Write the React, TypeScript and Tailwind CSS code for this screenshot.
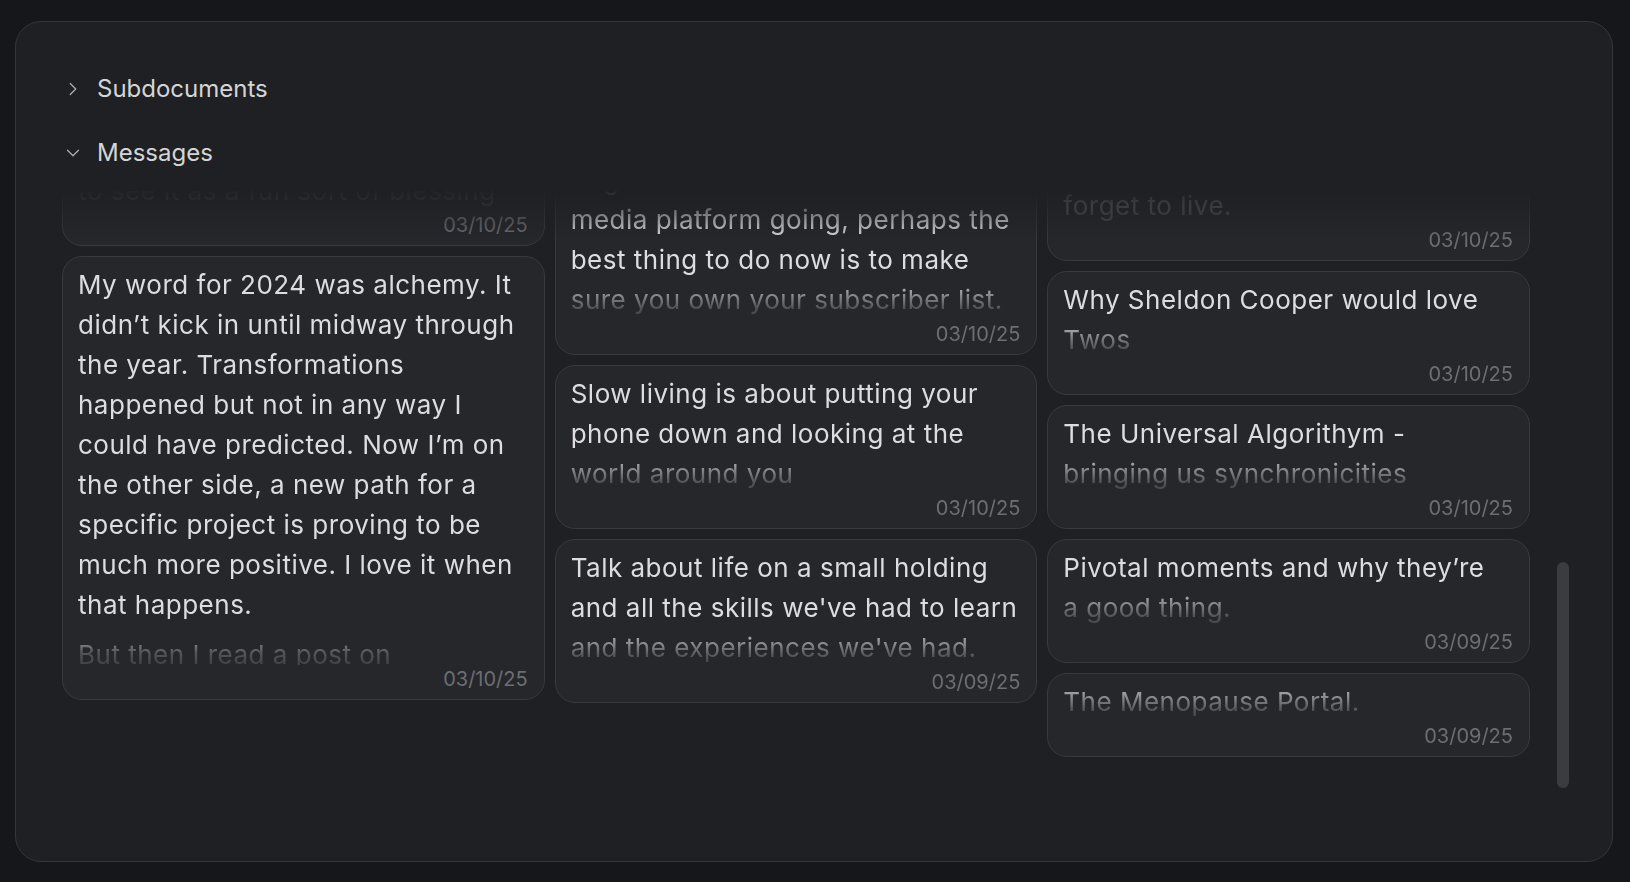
import React from "react";
import { ChevronDown, ChevronRight } from "lucide-react";

type Msg = {
  paras: React.ReactNode[];
  date: string;
  h?: string;
};

const fade =
  "[mask-image:linear-gradient(to_bottom,#000_calc(100%_-_44px),rgba(0,0,0,0.25)_calc(100%_-_12px),rgba(0,0,0,0.15)_100%)]";

const columns: Msg[][] = [
  [
    {
      paras: [
        <>
          Sometimes the smallest shift in perspective is all it takes
          <br />
          to see it as a fun sort of blessing
        </>,
      ],
      date: "03/10/25",
      h: "h-[116px]",
    },
    {
      paras: [
        "My word for 2024 was alchemy. It didn’t kick in until midway through the year. Transformations happened but not in any way I could have predicted. Now I’m on the other side, a new path for a specific project is proving to be much more positive. I love it when that happens.",
        "But then I read a post on synchronicity and how the word for the year should be chosen with care.",
      ],
      date: "03/10/25",
    },
  ],
  [
    {
      paras: [
        <>
          With so much uncertainty about where to go next and no quick way to get a new social
          <br />
          media platform going, perhaps the best thing to do now is to make sure you own your
          subscriber list.
        </>,
      ],
      date: "03/10/25",
      h: "h-[225px]",
    },
    {
      paras: ["Slow living is about putting your phone down and looking at the world around you"],
      date: "03/10/25",
    },
    {
      paras: [
        "Talk about life on a small holding and all the skills we've had to learn and the experiences we've had.",
      ],
      date: "03/09/25",
    },
  ],
  [
    {
      paras: [
        <>
          We get so caught up in making a living that we
          <br />
          forget to live.
        </>,
      ],
      date: "03/10/25",
      h: "h-[131px]",
    },
    { paras: ["Why Sheldon Cooper would love Twos"], date: "03/10/25" },
    { paras: ["The Universal Algorithym - bringing us synchronicities"], date: "03/10/25" },
    { paras: ["Pivotal moments and why they’re a\u00A0good thing."], date: "03/09/25" },
    { paras: ["The Menopause Portal."], date: "03/09/25" },
  ],
];

const MessageCard = ({ msg }: { msg: Msg }) => {
  return (
    <div
      className={`flex flex-col rounded-[20px] border border-[#393a3e] bg-[#26272b] px-[15px] py-[8px] ${
        msg.h ? msg.h + " justify-end overflow-hidden" : ""
      }`}
    >
      <div
        className={`max-h-[400px] overflow-hidden text-[26px] leading-[40px] tracking-[0.5px] text-[#dddddf] ${fade} ${
          msg.h ? "shrink-0" : ""
        }`}
      >
        {msg.paras.map((p, i) => (
          <p key={i} className={i > 0 ? "mt-[10px]" : ""}>
            {p}
          </p>
        ))}
      </div>
      <div className="mt-[2px] shrink-0 pr-px text-right text-[20px] leading-[24px] text-[#6c6e72]">
        {msg.date}
      </div>
    </div>
  );
};

const App = () => {
  return (
    <main className="flex h-[882px] w-full bg-[#16171a] pb-[20px] pl-[15px] pr-[17px] pt-[21px] font-['Inter','Noto_Sans',sans-serif]">
      <section className="flex flex-1 flex-col rounded-[26px] border border-[#35363a] bg-[#1f2023] pb-[71px] pl-[46px] pr-[43px] pt-[47px]">
        {/* Sections */}
        <div className="flex h-[40px] items-center gap-[13px] text-[#d4d5d7]">
          <div className="flex w-[22px] justify-center text-[#b0b1b5]">
            <ChevronRight size={28} strokeWidth={1.3} />
          </div>
          <span className="text-[24px]">Subdocuments</span>
        </div>
        <div className="mt-[24px] flex h-[40px] items-center gap-[13px] text-[#d4d5d7]">
          <div className="flex w-[22px] justify-center text-[#b0b1b5]">
            <ChevronDown size={28} strokeWidth={1.3} />
          </div>
          <span className="text-[24px]">Messages</span>
        </div>

        {/* Messages list */}
        <div className="mt-[17px] flex min-h-0 flex-1 gap-[27px]">
          <div className="flex min-w-0 flex-1 flex-col justify-end overflow-hidden pb-[33px] [mask-image:linear-gradient(to_bottom,transparent_0,#000_50px)]">
            <div className="grid shrink-0 grid-cols-3 items-start gap-x-[10px]">
              {columns.map((col, ci) => (
                <div key={ci} className="flex flex-col gap-[10px]">
                  {col.map((m, mi) => (
                    <MessageCard key={mi} msg={m} />
                  ))}
                </div>
              ))}
            </div>
          </div>
          <div className="flex w-[12px] flex-col justify-end pb-[2px]">
            <div className="h-[226px] rounded-full bg-[#3b3c40]" />
          </div>
        </div>
      </section>
    </main>
  );
};

export default App;
